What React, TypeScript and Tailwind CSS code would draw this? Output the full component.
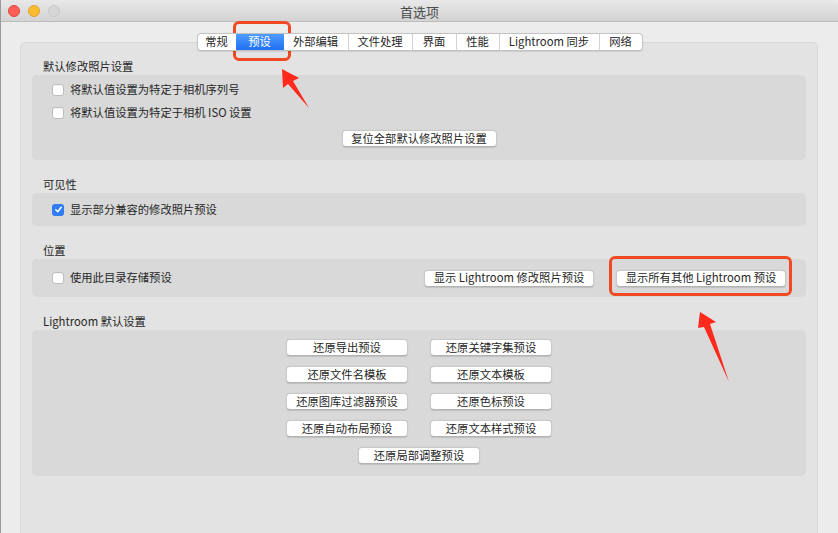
import React from "react";

const font = {
  fontFamily: '"Noto Sans CJK SC", "Noto Sans", "Liberation Sans", sans-serif',
};

const tabs = [
  { label: "常规", w: "w-[38px]" },
  { label: "预设", w: "w-[48px]", active: true },
  { label: "外部编辑", w: "w-[64px]" },
  { label: "文件处理", w: "w-[64px]" },
  { label: "界面", w: "w-[44px]" },
  { label: "性能", w: "w-[43px]" },
  { label: "Lightroom 同步", w: "w-[100px]" },
  { label: "网络", w: "w-[43px]" },
];

function Checkbox({ checked = false }: { checked?: boolean }) {
  if (checked) {
    return (
      <span className="flex h-[12px] w-[12px] items-center justify-center rounded-[3px] bg-[#2f7cf6]">
        <svg width="9" height="9" viewBox="0 0 10 10">
          <path
            d="M2 5.3 L4.2 7.5 L8 2.5"
            fill="none"
            stroke="#fff"
            strokeWidth="1.7"
            strokeLinecap="round"
            strokeLinejoin="round"
          />
        </svg>
      </span>
    );
  }
  return (
    <span className="h-[12px] w-[12px] rounded-[3px] border border-[#bdbdbd] bg-white shadow-[inset_0_1px_0_rgba(0,0,0,0.04)]" />
  );
}

function Btn({ children, w }: { children: React.ReactNode; w: string }) {
  return (
    <button
      className={`flex h-[17px] ${w} items-center justify-center rounded-[4px] border border-[#c9c9c9] border-b-[#b3b3b3] bg-white text-[11.3px] leading-none text-[#262626] shadow-[0_0.5px_1px_rgba(0,0,0,0.12)]`}
    >
      {children}
    </button>
  );
}

function Section({ title, children }: { title: string; children: React.ReactNode }) {
  return (
    <div className="flex flex-col">
      <div className="flex h-[16px] items-center pl-[11px] text-[11.3px] leading-none text-[#262626]">{title}</div>
      {children}
    </div>
  );
}

export default function App() {
  return (
    <div
      className="relative h-[533px] w-[838px] overflow-hidden bg-[#ececec] border-l border-[#9a9a9a]"
      style={font}
    >
      {/* title bar */}
      <div className="relative flex h-[22px] items-center border-b border-[#bcbcbc] bg-gradient-to-b from-[#e8e8e8] to-[#d3d3d3] rounded-tr-[5px]">
        <div className="flex items-center gap-[8px] pl-[7px]">
          <span className="h-[12px] w-[12px] rounded-full border border-[#e0443e] bg-[#fc5f57]" />
          <span className="h-[12px] w-[12px] rounded-full border border-[#dea236] bg-[#fdbc2e]" />
          <span className="h-[12px] w-[12px] rounded-full border border-[#c6c6c6] bg-[#d6d6d6]" />
        </div>
        <div className="pointer-events-none absolute inset-x-0 top-0 flex h-[22px] items-center justify-center text-[13px] leading-none text-[#4a4a4a]">
          首选项
        </div>
      </div>

      {/* tabs + panel */}
      <div className="flex flex-col pl-[19px] pr-[20px] pt-[11px]">
        <div className="relative z-10 flex justify-center">
          <div className="ml-[1px] flex h-[18px] overflow-hidden rounded-[4px] border border-[#c3c3c3] bg-white text-[11.3px] text-[#262626] shadow-[0_0.5px_1px_rgba(0,0,0,0.1)]">
            {tabs.map((t, i) => (
              <div
                key={t.label}
                className={`flex ${t.w} items-center justify-center leading-none ${
                  i > 0 && !t.active && !tabs[i - 1].active ? "border-l border-[#d2d2d2]" : ""
                } ${t.active ? "bg-gradient-to-b from-[#4f9cff] to-[#1f6ff2] text-white" : ""}`}
              >
                {t.label}
              </div>
            ))}
          </div>
        </div>

        <div className="-mt-[9px] flex h-[500px] flex-col gap-[17px] rounded-t-[5px] border border-[#d8d8d8] bg-[#e3e3e3] px-[11px] pt-[16px]">
          <Section title="默认修改照片设置">
            <div className="flex flex-col rounded-[5px] bg-[#d9d9d9] pt-[8px] pb-[13px]">
              <div className="flex h-[14px] items-center gap-[6px] pl-[20px] text-[11.3px] leading-none text-[#262626]">
                <Checkbox />
                <span>将默认值设置为特定于相机序列号</span>
              </div>
              <div className="mt-[9px] flex h-[14px] items-center gap-[6px] pl-[20px] text-[11.3px] leading-none text-[#262626]">
                <Checkbox />
                <span>将默认值设置为特定于相机 ISO 设置</span>
              </div>
              <div className="mt-[10px] flex justify-center">
                <Btn w="w-[155px]">复位全部默认修改照片设置</Btn>
              </div>
            </div>
          </Section>

          <Section title="可见性">
            <div className="flex h-[33px] items-center gap-[6px] rounded-[5px] bg-[#d9d9d9] pl-[20px] text-[11.3px] leading-none text-[#262626]">
              <Checkbox checked />
              <span>显示部分兼容的修改照片预设</span>
            </div>
          </Section>

          <Section title="位置">
            <div className="flex h-[38px] items-center rounded-[5px] bg-[#d9d9d9] pl-[20px] pr-[20px] text-[11.3px] leading-none text-[#262626]">
              <div className="flex items-center gap-[6px]">
                <Checkbox />
                <span>使用此目录存储预设</span>
              </div>
              <div className="ml-auto flex gap-[22px]">
                <Btn w="w-[170px]">显示 Lightroom 修改照片预设</Btn>
                <Btn w="w-[170px]">显示所有其他 Lightroom 预设</Btn>
              </div>
            </div>
          </Section>

          <Section title="Lightroom 默认设置">
            <div className="flex flex-col items-center gap-[10px] rounded-[5px] bg-[#d9d9d9] pt-[9px] pb-[12px]">
              <div className="grid grid-cols-2 gap-x-[22px] gap-y-[10px]">
                <Btn w="w-[122px]">还原导出预设</Btn>
                <Btn w="w-[122px]">还原关键字集预设</Btn>
                <Btn w="w-[122px]">还原文件名模板</Btn>
                <Btn w="w-[122px]">还原文本模板</Btn>
                <Btn w="w-[122px]">还原图库过滤器预设</Btn>
                <Btn w="w-[122px]">还原色标预设</Btn>
                <Btn w="w-[122px]">还原自动布局预设</Btn>
                <Btn w="w-[122px]">还原文本样式预设</Btn>
              </div>
              <Btn w="w-[122px]">还原局部调整预设</Btn>
            </div>
          </Section>
        </div>
      </div>

      {/* annotations */}
      <div className="absolute left-[232px] top-[21px] h-[40px] w-[58px] rounded-[6px] border-[3px] border-[#ef4a24]" />
      <div className="absolute left-[608px] top-[256px] h-[40px] w-[183px] rounded-[6px] border-[3px] border-[#ef4a24]" />
      <svg className="absolute left-0 top-0" width="838" height="533" viewBox="0 0 838 533">
        <polygon points="281,69 298,78 292,81 308,108 287,84 282,88" fill="#ff2a1c" />
        <polygon points="699,312 715,322 709,324 728,382 703,327 697,328" fill="#ff2a1c" />
      </svg>
    </div>
  );
}
